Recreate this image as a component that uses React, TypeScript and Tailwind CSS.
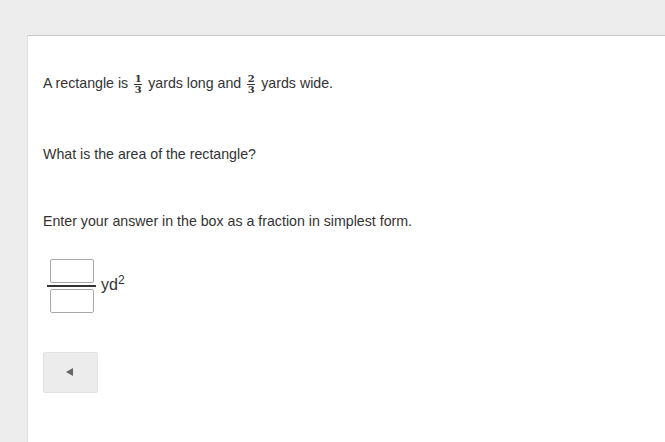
import React from "react";

const Frac = ({ n, d }: { n: string; d: string }) => (
  <span className="mx-[6px] inline-flex flex-col items-center align-middle font-['DejaVu_Serif','Liberation_Serif',serif] text-[10px] font-bold leading-[8px]">
    <span>{n}</span>
    <span className="my-px h-px w-[8px] bg-[#333]" />
    <span>{d}</span>
  </span>
);

export default function App() {
  return (
    <div className="h-[442px] w-[665px] overflow-hidden bg-[#ededed] pl-[27px] pt-[35px] font-['Liberation_Sans',Arial,sans-serif] text-[14.2px] text-[#333]">
      <div className="h-[420px] border-l border-t border-l-[#e2e2e2] border-t-[#c8c8c8] bg-white pl-[15px] pt-[37px]">
        <p className="leading-[20px]">
          A rectangle is<Frac n="1" d="3" />yards long and<Frac n="2" d="3" />yards wide.
        </p>
        <p className="mt-[51px] leading-[18px]">What is the area of the rectangle?</p>
        <p className="mt-[49px] leading-[18px]">Enter your answer in the box as a fraction in simplest form.</p>

        <div className="ml-[4px] mt-[29px] flex items-center">
          <div className="flex w-[49px] flex-col items-center">
            <div className="h-[24px] w-[44px] rounded-[2px] border border-[#a9a9a9] bg-white" />
            <div className="my-[2px] h-[2px] w-[49px] bg-[#333]" />
            <div className="h-[24px] w-[44px] rounded-[2px] border border-[#a9a9a9] bg-white" />
          </div>
          <span className="mb-[2px] ml-[5px] text-[16px]">
            yd<sup className="text-[12px]">2</sup>
          </span>
        </div>

        <button className="mt-[39px] flex h-[41px] w-[55px] items-center justify-center rounded-[2px] border border-[#e2e2e2] bg-[#ececec]">
          <span className="mr-[3px] h-0 w-0 border-y-[4px] border-r-[7px] border-y-transparent border-r-[#666]" />
        </button>
      </div>
    </div>
  );
}
